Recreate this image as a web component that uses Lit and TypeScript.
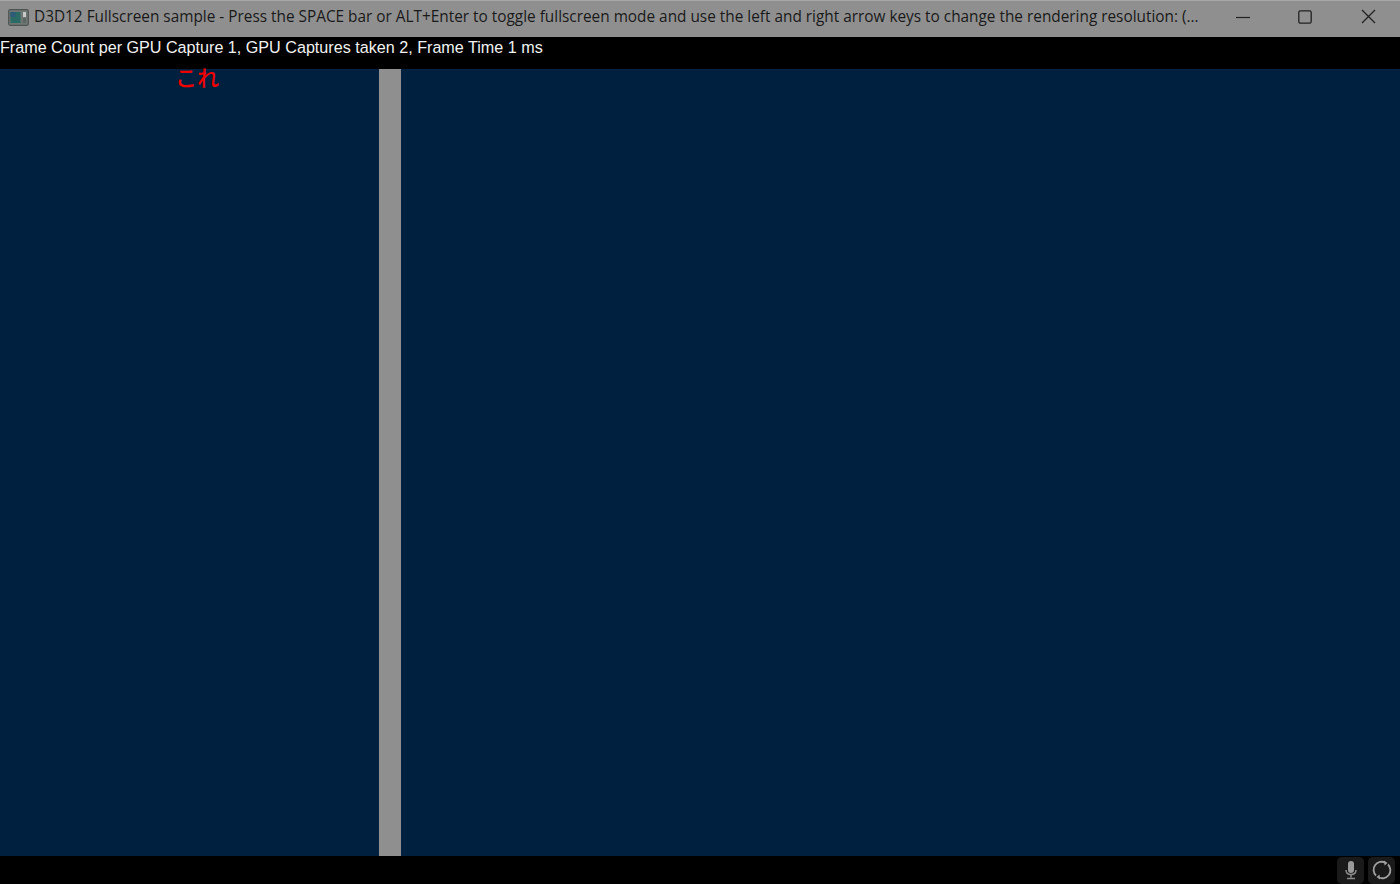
import { LitElement, html, css } from "lit";
import { customElement } from "lit/decorators.js";

@customElement("app-root")
export class AppRoot extends LitElement {
  static styles = css`
    :host { display: flex; flex-direction: column; width: 1400px; height: 884px; overflow: hidden; background: #000; position: relative; }
    .title { height: 37px; flex: none; box-sizing: border-box; background: #8f8f8f; border-top: 1px solid #a8a8a8; display: flex; align-items: center; padding-left: 8px; color: #1a1a1a; font: 15.37px "Open Sans", sans-serif; }
    .app-icon { width: 21px; height: 17px; flex: none; margin: -4px 5px 0 0; }
    .title-text { flex: 1; white-space: nowrap; overflow: hidden; padding-bottom: 5px; }
    .win { display: flex; flex: none; margin-left: 8px; }
    .win-btn { width: 63px; height: 36px; display: flex; align-items: center; justify-content: center; padding-bottom: 5px; box-sizing: border-box; }
    .win-btn.max { margin-right: 1px; margin-left: -1px; }
    .info { height: 32px; flex: none; background: #000; color: #f2f2f2; font: 16.15px/20px "Liberation Sans", sans-serif; white-space: nowrap; box-sizing: border-box; }
    .stage { height: 787px; flex: none; background: #00203f; display: grid; grid-template-columns: 379px 22px 1fr; }
    .slider { background: #8f8f8f; }
    .foot { flex: 1; background: #000; display: flex; justify-content: flex-end; align-items: center; gap: 4px; padding-right: 5px; }
    .chip { width: 27px; height: 27px; background: #1a1a1a; border-radius: 5px; display: flex; align-items: center; justify-content: center; }
    .mark { position: absolute; left: 175px; top: 58px; color: #f00000; font: 500 22px/36px "Noto Sans CJK JP", sans-serif; }
  `;

  render() {
    return html`
      <div class="title">
        <svg class="app-icon" viewBox="0 0 21 17">
          <rect x=".7" y=".7" width="19.6" height="15.6" rx="1.5" fill="#6f7775" stroke="#4f5352" stroke-width="1.2"/>
          <rect x="2.5" y="3" width="10" height="11" fill="#2c6a66"/>
          <rect x="2.5" y="3" width="5" height="5" fill="#2d5a78"/>
          <rect x="15" y="3" width="3" height="5" fill="#c8c8c8"/>
          <rect x="15" y="9" width="3" height="5" fill="#5c6664"/>
        </svg>
        <div class="title-text">D3D12 Fullscreen sample - Press the SPACE bar or ALT+Enter to toggle fullscreen mode and use the left and right arrow keys to change the rendering resolution: (...</div>
        <div class="win">
          <div class="win-btn"><svg width="14" height="14" viewBox="0 0 14 14"><path d="M0 7.500h14" stroke="#222" stroke-width="1.2"/></svg></div>
          <div class="win-btn max"><svg width="14" height="14" viewBox="0 0 14 14"><rect x=".8" y=".8" width="12.4" height="12.4" rx="1.6" fill="none" stroke="#222" stroke-width="1.3"/></svg></div>
          <div class="win-btn"><svg width="15" height="15" viewBox="0 0 15 15"><path d="M1 1l13 13M14 1L1 14" stroke="#222" stroke-width="1.3"/></svg></div>
        </div>
      </div>
      <div class="info">Frame Count per GPU Capture 1, GPU Captures taken 2, Frame Time 1 ms</div>
      <div class="stage"><div></div><div class="slider"></div><div></div></div>
      <div class="foot">
        <div class="chip"><svg width="16" height="20" viewBox="0 0 16 20"><rect x="5" y="1" width="6" height="12" rx="3" fill="#9a9a9a"/><path d="M3 10c0 3 2 4.500 5 4.500s5-1.500 5-4.500M8 14.500v3M4 18.500h8" fill="none" stroke="#8a8a8a" stroke-width="1.500"/></svg></div>
        <div class="chip"><svg width="22" height="22" viewBox="0 0 22 22"><path d="M14.500 3.800A8 8 0 0 0 5 16.500M7.500 18.200A8 8 0 0 0 17 5.500" fill="none" stroke="#a0a0a0" stroke-width="1.800"/><path d="M13 1.500l3.500 2.500L13.500 6.500zM9 20.500l-3.500-2.500L8.500 15.500z" fill="#a0a0a0"/></svg></div>
      </div>
      <div class="mark">これ</div>
    `;
  }
}
